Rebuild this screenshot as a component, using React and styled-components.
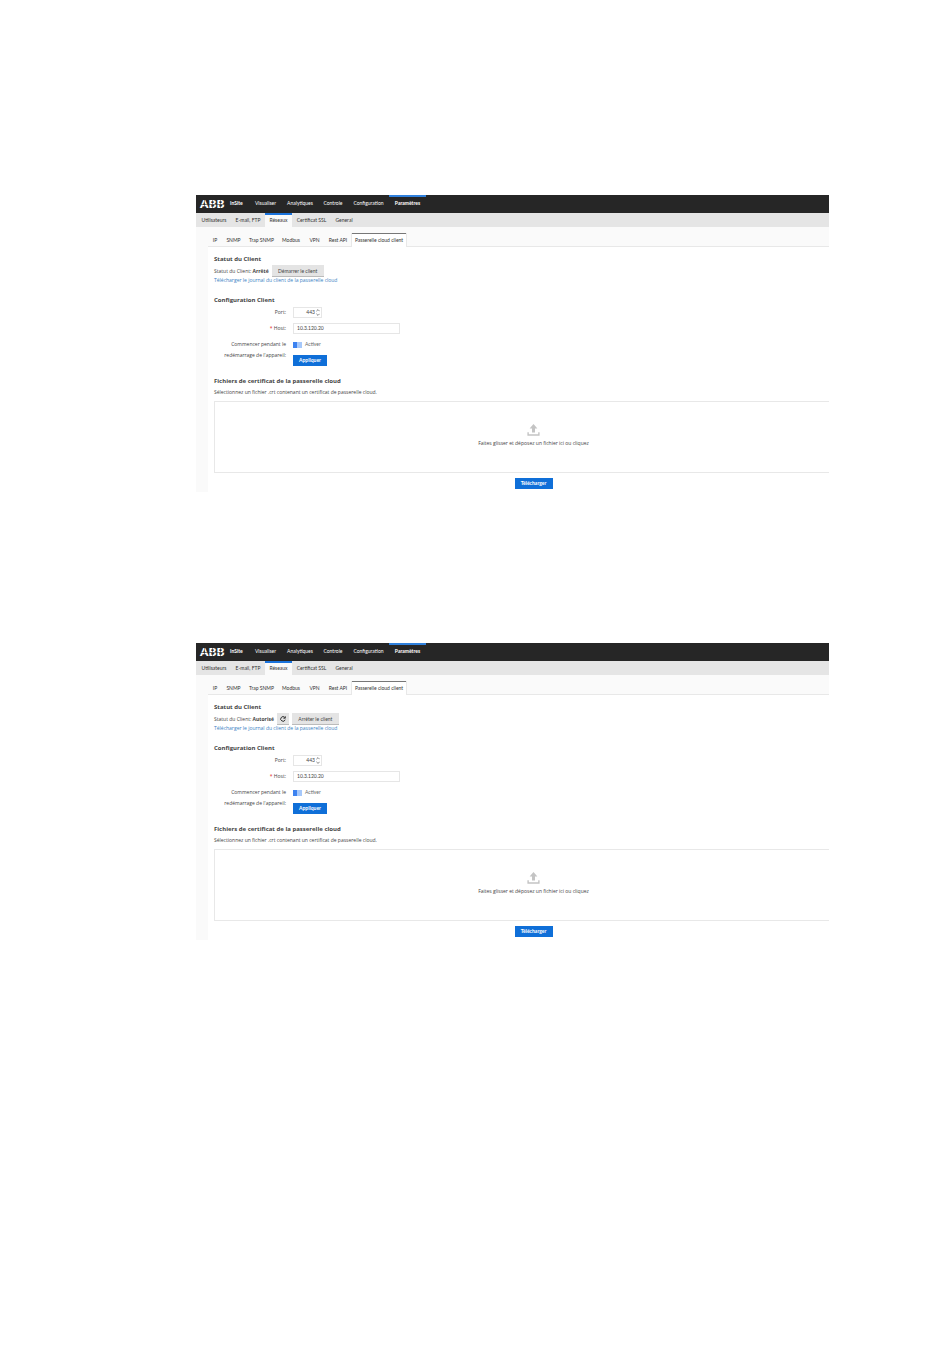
import React, { useId, useState } from 'react';
import styled, { createGlobalStyle } from 'styled-components';

const mainMenu = [
  { label: 'Visualiser', width: 33 },
  { label: 'Analytiques', width: 36 },
  { label: 'Controle', width: 30 },
  { label: 'Configuration', width: 41 },
  { label: 'Paramètres', width: 37, active: true },
];

const subMenu = [
  { label: 'Utilisateurs', width: 34 },
  { label: 'E-mail, FTP', width: 34 },
  { label: 'Réseaux', width: 27, active: true },
  { label: 'Certificat SSL', width: 39 },
  { label: 'General', width: 26 },
];

const networkTabs = [
  { label: 'IP', width: 14 },
  { label: 'SNMP', width: 23 },
  { label: 'Trap SNMP', width: 33 },
  { label: 'Modbus', width: 26 },
  { label: 'VPN', width: 21 },
  { label: 'Rest API', width: 26 },
  { label: 'Passerelle cloud client', width: 56, active: true },
];

const RefreshIcon = () => (
  <svg width="6" height="6" viewBox="0 0 12 12" fill="none" stroke="#222" strokeWidth="1.8">
    <path d="M10.4 7.4A4.6 4.6 0 1 1 9.6 3" />
    <path d="M10.6 0.6V4.4H6.8" />
  </svg>
);

const UploadIcon = () => (
  <svg width="13" height="12" viewBox="0 0 13 12" fill="#c4c4c4">
    <path d="M6.5 0L10.4 4.4H8V8.6H5V4.4H2.6Z" />
    <path d="M0.4 8.2H1.8V10.2H11.2V8.2H12.6V11.8H0.4Z" />
  </svg>
);

const SpinnerIcon = () => (
  <svg width="4" height="7" viewBox="0 0 4 7" fill="none" stroke="#555" strokeWidth="0.7">
    <path d="M0.4 2.2L2 0.6L3.6 2.2" />
    <path d="M0.4 4.8L2 6.4L3.6 4.8" />
  </svg>
);

const GatewayScreen = ({ status, action, running }) => {
  const id = useId();
  const [port, setPort] = useState('443');
  const [host, setHost] = useState('10.3.120.20');
  const [autoStart, setAutoStart] = useState(false);

  return (
    <Screen>
      <TopBar>
        <Logo>ABB</Logo>
        <Product>InSite</Product>
        {mainMenu.map((item) => (
          <MainLink key={item.label} href="#" $width={item.width} $active={item.active}>
            {item.label}
          </MainLink>
        ))}
      </TopBar>
      <SubBar>
        {subMenu.map((item) => (
          <SubLink key={item.label} href="#" $width={item.width} $active={item.active}>
            {item.label}
          </SubLink>
        ))}
      </SubBar>
      <TabBar>
        {networkTabs.map((item) => (
          <TabLink key={item.label} href="#" $width={item.width} $active={item.active}>
            {item.label}
          </TabLink>
        ))}
      </TabBar>

      <Content>
        <Title>Statut du Client</Title>
        <StatusRow>
          <span>
            Statut du Client: <strong>{status}</strong>
          </span>
          {running && (
            <GreyButton type="button" aria-label="Actualiser" $width={12}>
              <RefreshIcon />
            </GreyButton>
          )}
          <GreyButton type="button" $width={running ? 47 : 52}>
            {action}
          </GreyButton>
        </StatusRow>
        <LogLink href="#">Télécharger le journal du client de la passerelle cloud</LogLink>

        <Title $top={12}>Configuration Client</Title>
        <Form onSubmit={(e) => e.preventDefault()}>
          <Label htmlFor={`${id}-port`}>Port:</Label>
          <PortBox>
            <PortInput id={`${id}-port`} value={port} onChange={(e) => setPort(e.target.value)} />
            <SpinnerIcon />
          </PortBox>

          <Label htmlFor={`${id}-host`}>
            <Required>*</Required> Host:
          </Label>
          <HostInput id={`${id}-host`} value={host} onChange={(e) => setHost(e.target.value)} />

          <Label htmlFor={`${id}-auto`}>Commencer pendant le redémarrage de l'appareil:</Label>
          <Stack>
            <SwitchRow>
              <Switch
                id={`${id}-auto`}
                type="checkbox"
                checked={autoStart}
                onChange={(e) => setAutoStart(e.target.checked)}
              />
              Activer
            </SwitchRow>
            <BlueButton type="submit" $width={34}>Appliquer</BlueButton>
          </Stack>
        </Form>

        <Title $top={11}>Fichiers de certificat de la passerelle cloud</Title>
        <Hint>Sélectionnez un fichier .crt contenant un certificat de passerelle cloud.</Hint>
        <Upload>
          <DropZone type="button">
            <UploadIcon />
            Faites glisser et déposez un fichier ici ou cliquez
          </DropZone>
          <BlueButton type="button" $width={38}>Télécharger</BlueButton>
        </Upload>
      </Content>
    </Screen>
  );
};

const App = () => (
  <>
    <GlobalStyle />
    <Page>
      <GatewayScreen status="Arrêté" action="Démarrer le client" />
      <GatewayScreen status="Autorisé" action="Arrêter le client" running />
    </Page>
  </>
);

const GlobalStyle = createGlobalStyle`
  * {
    box-sizing: border-box;
  }

  body {
    margin: 0;
    background-color: #fff;
    color: #444;
    font-family: 'Open Sans', 'Noto Sans', sans-serif;
    font-size: 5px;
  }

  button, input {
    font: inherit;
    color: inherit;
    margin: 0;
  }

  a {
    text-decoration: none;
  }
`;

const Page = styled.main`
  display: flex;
  flex-direction: column;
  gap: 151px;
  padding: 195px 121px 195px 196px;
`;

const Screen = styled.section`
  overflow: hidden;
  background-color: #fafafa;
`;

const TopBar = styled.nav`
  display: flex;
  align-items: center;
  height: 18px;
  padding-left: 4px;
  background-color: #262626;
  color: #fff;
  font-family: Lato, sans-serif;
`;

const Logo = styled.span`
  position: relative;
  width: 25px;
  font-size: 12px;
  font-weight: 900;
  line-height: 18px;

  /* cuts that split the letters */
  &::after {
    content: '';
    position: absolute;
    inset: 4px 1px 4px 0;
    background:
      linear-gradient(#262626, #262626) 0 5px / 100% 1px no-repeat,
      linear-gradient(#262626, #262626) 4px 0 / 1px 100% no-repeat,
      linear-gradient(#262626, #262626) 12px 0 / 1px 100% no-repeat,
      linear-gradient(#262626, #262626) 20px 0 / 1px 100% no-repeat;
    opacity: 0.5;
  }
`;

const Product = styled.span`
  width: 24px;
  padding: 0 0 2px 5px;
  font-weight: 700;
`;

const BarLink = styled.a`
  display: flex;
  align-items: center;
  justify-content: center;
  flex: none;
  width: ${(props) => props.$width}px;
  height: 100%;
  white-space: nowrap;
`;

const MainLink = styled(BarLink)`
  padding-bottom: 2px;
  color: #fff;
  font-weight: ${(props) => (props.$active ? 700 : 400)};
  box-shadow: ${(props) => (props.$active ? 'inset 0 2px #2f80dc' : 'none')};
`;

const SubBar = styled.nav`
  display: flex;
  height: 14px;
  padding-left: 1px;
  background-color: #e5e5e5;
  font-family: Lato, sans-serif;
`;

const SubLink = styled(BarLink)`
  padding-bottom: 1px;
  color: #333;
  background-color: ${(props) => (props.$active ? '#fafafa' : 'transparent')};
  box-shadow: ${(props) => (props.$active ? 'inset 0 2px #1a73dc' : 'none')};
`;

const TabBar = styled.nav`
  display: flex;
  align-items: flex-end;
  height: 20px;
  margin-left: 12px;
  border-bottom: 1px solid #e8e8e8;
  font-family: Lato, sans-serif;
`;

const TabLink = styled(BarLink)`
  height: 14px;
  color: #333;
  background-color: ${(props) => (props.$active ? '#fff' : 'transparent')};
  border: solid #e8e8e8;
  border-width: ${(props) => (props.$active ? '0 1px' : '0')};
  box-shadow: ${(props) => (props.$active ? 'inset 0 1px #777' : 'none')};
  margin-bottom: -1px;
`;

const Content = styled.div`
  margin-left: 12px;
  padding: 8px 0 3px 6px;
  background-color: #fff;
`;

const Title = styled.h2`
  margin: ${(props) => props.$top || 0}px 0 0;
  font-size: 6px;
  font-weight: 700;
  line-height: 8px;
`;

const StatusRow = styled.div`
  display: flex;
  align-items: center;
  gap: 3px;
  height: 12px;
  margin-top: 2px;
`;

const GreyButton = styled.button`
  display: flex;
  align-items: center;
  justify-content: center;
  width: ${(props) => props.$width}px;
  height: 12px;
  padding: 0;
  border: 0;
  border-bottom: 1px solid #bbb;
  background-color: #e4e4e4;
  font-family: Lato, sans-serif;
  white-space: nowrap;
`;

const LogLink = styled.a`
  display: block;
  width: fit-content;
  color: #3b7fc4;
  line-height: 7px;
`;

const Form = styled.form`
  display: grid;
  grid-template-columns: 72px 1fr;
  gap: 5px 7px;
  margin-top: 3px;
  line-height: 11px;
`;

const Label = styled.label`
  text-align: right;
`;

const Required = styled.span`
  color: #e02020;
`;

const PortBox = styled.div`
  display: flex;
  align-items: center;
  width: 29px;
  height: 11px;
  border: 1px solid #e6e6e6;
`;

const PortInput = styled.input`
  width: 22px;
  padding: 0 1px 0 0;
  border: 0;
  outline: 0;
  background: none;
  font-family: Lato, sans-serif;
  text-align: right;
`;

const HostInput = styled.input`
  width: 107px;
  height: 11px;
  padding: 0 3px;
  border: 1px solid #e6e6e6;
  font-family: Lato, sans-serif;
`;

const Stack = styled.div`
  display: flex;
  flex-direction: column;
  gap: 5px;
`;

const SwitchRow = styled.div`
  display: flex;
  align-items: center;
  gap: 3px;
  height: 11px;
  color: #666;
  font-family: Lato, sans-serif;
`;

const Switch = styled.input`
  appearance: none;
  width: 9px;
  height: 6px;
  background: linear-gradient(to right, #3c82f0 4px, #a6c8fa 4px);

  &:checked {
    background: linear-gradient(to right, #a6c8fa 5px, #3c82f0 5px);
  }
`;

const BlueButton = styled.button`
  width: ${(props) => props.$width}px;
  height: 11px;
  padding: 0;
  border: 0;
  background-color: #0f6fd8;
  color: #fff;
  font-family: Lato, sans-serif;
  font-weight: 700;
  line-height: 11px;
`;

const Hint = styled.p`
  margin: 3px 0 5px;
  line-height: 8px;
`;

/* runs on past the visible edge of the screen */
const Upload = styled.div`
  display: flex;
  flex-direction: column;
  align-items: center;
  gap: 5px;
  margin-right: -24px;
`;

const DropZone = styled.button`
  display: flex;
  flex-direction: column;
  align-items: center;
  justify-content: center;
  gap: 4px;
  width: 100%;
  height: 72px;
  padding: 0 0 4px;
  border: 1px solid #e8e8e8;
  background-color: #fff;
`;

export default App;
